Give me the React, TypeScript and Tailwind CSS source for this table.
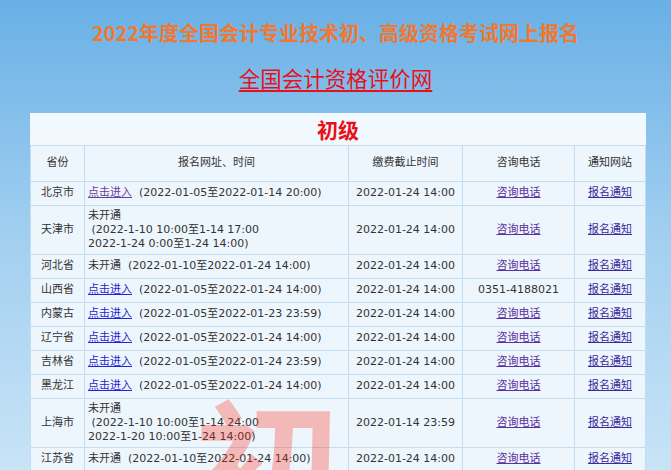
import React from "react";

type Row = {
  name: string;
  open: boolean;
  visited?: boolean;
  lines: string[];
  deadline: string;
  phone?: string;
};

const rows: Row[] = [
  { name: "北京市", open: true, visited: true, lines: ["(2022-01-05至2022-01-14 20:00)"], deadline: "2022-01-24 14:00" },
  { name: "天津市", open: false, lines: ["\u00a0(2022-1-10 10:00至1-14 17:00", "2022-1-24 0:00至1-24 14:00)"], deadline: "2022-01-24 14:00" },
  { name: "河北省", open: false, lines: ["(2022-01-10至2022-01-24 14:00)"], deadline: "2022-01-24 14:00" },
  { name: "山西省", open: true, lines: ["(2022-01-05至2022-01-24 14:00)"], deadline: "2022-01-24 14:00", phone: "0351-4188021" },
  { name: "内蒙古", open: true, lines: ["(2022-01-05至2022-01-23 23:59)"], deadline: "2022-01-24 14:00" },
  { name: "辽宁省", open: true, lines: ["(2022-01-05至2022-01-24 14:00)"], deadline: "2022-01-24 14:00" },
  { name: "吉林省", open: true, lines: ["(2022-01-05至2022-01-24 23:59)"], deadline: "2022-01-24 14:00" },
  { name: "黑龙江", open: true, lines: ["(2022-01-05至2022-01-24 14:00)"], deadline: "2022-01-24 14:00" },
  { name: "上海市", open: false, lines: ["\u00a0(2022-1-10 10:00至1-14 24:00", "2022-1-20 10:00至1-24 14:00)"], deadline: "2022-01-14 23:59" },
  { name: "江苏省", open: false, lines: ["(2022-01-10至2022-01-24 14:00)"], deadline: "2022-01-24 14:00" },
];

const td = "border border-[#c2ddf0] px-[3px] py-[3px] h-[24px] align-middle";

export default function App() {
  return (
    <div className="relative min-h-screen overflow-hidden bg-gradient-to-b from-[#68b0e6] via-[#a2cff0] to-[#c8e4f7] pt-[20px]">
      <h1 className="text-center text-[20px] leading-[26px] font-bold text-[#f2772f] [font-family:'Noto_Sans_CJK_SC',sans-serif]">
        2022年度全国会计专业技术初、高级资格考试网上报名
      </h1>
      <div className="mt-[19px] text-center text-[21.5px] leading-[26px] [font-family:'Noto_Sans_CJK_SC',sans-serif]">
        <a className="text-[#e8101a] underline underline-offset-[3px]" href="#">全国会计资格评价网</a>
      </div>

      <table className="relative mt-[22px] ml-[30px] w-[615px] table-fixed border-collapse bg-[#eef6fd] text-[11px] leading-[14px] text-[#333] [font-family:'DejaVu_Sans','Noto_Sans_CJK_SC',sans-serif]">
        <colgroup>
          <col className="w-[54px]" />
          <col className="w-[264px]" />
          <col className="w-[114px]" />
          <col className="w-[112px]" />
          <col className="w-[71px]" />
        </colgroup>
        <tbody>
          <tr className="h-[32px] bg-[#f1f8fe]">
            <td colSpan={5} className="border-b border-[#c2ddf0] text-center text-[21px] font-bold text-[#e8101a] [font-family:'Noto_Sans_CJK_SC',sans-serif]">
              初级
            </td>
          </tr>
          <tr className="h-[36px]">
            <td className={`${td} text-center`}>省份</td>
            <td className={`${td} text-center`}>报名网址、时间</td>
            <td className={`${td} text-center`}>缴费截止时间</td>
            <td className={`${td} text-center`}>咨询电话</td>
            <td className={`${td} text-center`}>通知网站</td>
          </tr>
          {rows.map((r) => (
            <tr key={r.name}>
              <td className={`${td} text-center`}>{r.name}</td>
              <td className={td}>
                {r.lines.length > 1 ? (
                  <>
                    未开通
                    {r.lines.map((l) => (
                      <div key={l}>{l}</div>
                    ))}
                  </>
                ) : (
                  <>
                    {r.open ? (
                      <a href="#" className={`underline ${r.visited ? "text-[#6b3a9c]" : "text-[#2424d6]"}`}>点击进入</a>
                    ) : (
                      <span>未开通</span>
                    )}
                    {"\u00a0\u00a0"}
                    {r.lines[0]}
                  </>
                )}
              </td>
              <td className={`${td} text-center`}>{r.deadline}</td>
              <td className={`${td} text-center`}>
                {r.phone ? r.phone : <a href="#" className="underline text-[#5a2f9e]">咨询电话</a>}
              </td>
              <td className={`${td} text-center`}>
                <a href="#" className="underline text-[#3a2c9c]">报名通知</a>
              </td>
            </tr>
          ))}
        </tbody>
      </table>

      {/* watermark */}
      <div className="pointer-events-none absolute left-[194px] top-[388px] text-[146px] leading-none font-bold text-[#ff2a1a]/30 [font-family:'Noto_Sans_CJK_SC',sans-serif]">
        初
      </div>
    </div>
  );
}
